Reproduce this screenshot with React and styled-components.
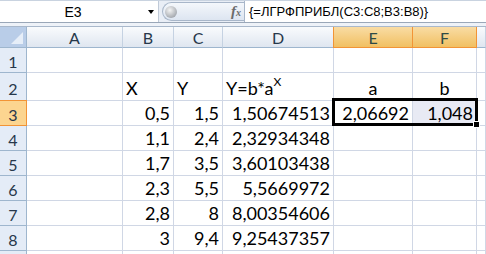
import React from "react";
import styled, { createGlobalStyle } from "styled-components";

const GlobalStyle = createGlobalStyle`
  html, body {
    margin: 0;
    padding: 0;
    background: #fff;
    overflow: hidden;
  }
  body {
    font-family: Lato, "Liberation Sans", sans-serif;
  }
`;

const columns = [
  { key: "A" },
  { key: "B" },
  { key: "C" },
  { key: "D" },
  { key: "E", selected: true },
  { key: "F", selected: true },
  { key: "" },
];

const rows = [
  { n: 1, height: 25, cells: ["", "", "", "", "", "", ""] },
  {
    n: 2,
    height: 28,
    cells: [
      "",
      { text: "X", align: "left" },
      { text: "Y", align: "left" },
      { text: "Y=b*a", sup: "X", align: "left" },
      { text: "a", align: "center" },
      { text: "b", align: "center" },
      "",
    ],
  },
  {
    n: 3,
    height: 25,
    selected: true,
    cells: ["", "0,5", "1,5", "1,50674513", "2,06692", { text: "1,048", tint: true }, ""],
  },
  { n: 4, height: 25, cells: ["", "1,1", "2,4", "2,32934348", "", "", ""] },
  { n: 5, height: 25, cells: ["", "1,7", "3,5", "3,60103438", "", "", ""] },
  { n: 6, height: 25, cells: ["", "2,3", "5,5", "5,5669972", "", "", ""] },
  { n: 7, height: 25, cells: ["", "2,8", "8", "8,00354606", "", "", ""] },
  { n: 8, height: 25, cells: ["", "3", "9,4", "9,25437357", "", "", ""] },
  // row 9 only peeks in at the bottom edge, its number is below the frame
  { n: 9, height: 25, hideLabel: true, cells: ["", "", "", "", "", "", ""] },
];

export default function App() {
  return (
    <>
      <GlobalStyle />
      <Window>
        <FormulaBar>
          <NameBox>
            <span>E3</span>
            <DropArrow />
          </NameBox>
          <FxButton>
            <Knob />
            <Fx>
              f<small>x</small>
            </Fx>
          </FxButton>
          <FormulaInput>{"{=ЛГРФПРИБЛ(C3:C8;B3:B8)}"}</FormulaInput>
        </FormulaBar>
        <Divider />
        <Sheet>
          <Grid $rows={rows.map((r) => `${r.height}px`).join(" ")}>
            <Corner>
              <svg width="14" height="14" viewBox="0 0 14 14">
                <path d="M13 1 L13 13 L1 13 Z" fill="#e6eef8" />
              </svg>
            </Corner>
            {columns.map((col, i) => (
              <ColumnHeader key={i} $selected={col.selected}>
                {col.key}
              </ColumnHeader>
            ))}
            {rows.map((row) => (
              <React.Fragment key={row.n}>
                <RowHeader $selected={row.selected}>
                  {row.hideLabel ? "" : row.n}
                </RowHeader>
                {row.cells.map((cell, i) => {
                  const data = typeof cell === "string" ? { text: cell } : cell;
                  return (
                    <Cell key={i} $align={data.align} $tint={data.tint}>
                      <span>
                        {data.text}
                        {data.sup && <Sup>{data.sup}</Sup>}
                      </span>
                    </Cell>
                  );
                })}
              </React.Fragment>
            ))}
          </Grid>
          <Selection>
            <FillHandle />
          </Selection>
        </Sheet>
      </Window>
    </>
  );
}

const Window = styled.div`
  width: 486px;
  height: 254px;
  overflow: hidden;
  display: flex;
  flex-direction: column;
  background: #fff;
`;

const FormulaBar = styled.div`
  height: 22px;
  display: flex;
  align-items: stretch;
  background: #e9eef6;
  border-top: 1px solid #c9d3e0;
  box-sizing: border-box;
  font-family: "Liberation Sans", Arial, sans-serif;
  font-size: 14px;
  color: #000;
`;

const NameBox = styled.div`
  width: 158px;
  display: flex;
  align-items: center;
  justify-content: center;
  position: relative;
  background: #fff;
  border-right: 1px solid #c0cad8;

  span {
    margin-left: -12px;
  }
`;

const DropArrow = styled.i`
  position: absolute;
  right: 4px;
  top: 9px;
  width: 0;
  height: 0;
  border-left: 3.5px solid transparent;
  border-right: 3.5px solid transparent;
  border-top: 4px solid #000;
`;

const FxButton = styled.div`
  margin: 1px 0 1px 3px;
  width: 82px;
  display: flex;
  align-items: center;
  justify-content: space-between;
  box-sizing: border-box;
  padding: 0 3px 0 2px;
  border: 1px solid #a8b6c9;
  border-right: none;
  border-radius: 10px 0 0 10px;
  background: linear-gradient(#f4f7fb, #dde5f1);
`;

const Knob = styled.span`
  width: 12px;
  height: 12px;
  border-radius: 50%;
  background: radial-gradient(circle at 40% 35%, #f4f4f4, #a9adb3 70%, #8e939a);
`;

const Fx = styled.span`
  font-family: "Liberation Serif", serif;
  font-style: italic;
  font-weight: bold;
  font-size: 15px;
  color: #6b6b6b;

  small {
    font-size: 10px;
  }
`;

const FormulaInput = styled.div`
  flex: 1;
  display: flex;
  align-items: center;
  padding-left: 4px;
  background: #fff;
  border-left: 1px solid #a8b6c9;
  white-space: nowrap;
  font-size: 13px;
`;

const Divider = styled.div`
  height: 5px;
  background: #eef2f8;
  border-top: 1px solid #9aa7b8;
  border-bottom: 1px solid #a9b8cb;
  box-sizing: border-box;
`;

const Sheet = styled.div`
  position: relative;
  flex: 1;
  overflow: hidden;
`;

const Grid = styled.div`
  display: grid;
  grid-template-columns: 27px 96px 51px 49px 111px 79px 64px 1fr;
  grid-template-rows: 21px ${({ $rows }) => $rows};
`;

const Corner = styled.div`
  box-sizing: border-box;
  background: #b9cde8;
  border-right: 1px solid #9eb6ce;
  border-bottom: 1px solid #9eb6ce;
  display: flex;
  align-items: flex-end;
  justify-content: flex-end;
  padding: 0 2px 2px 0;
`;

const ColumnHeader = styled.div`
  box-sizing: border-box;
  display: flex;
  align-items: center;
  justify-content: center;
  font-size: 16px;
  color: ${({ $selected }) => ($selected ? "#2f4a45" : "#27384b")};
  background: ${({ $selected }) =>
    $selected
      ? "linear-gradient(#f9dca4, #f1c062)"
      : "linear-gradient(#f9fbfd, #dfe6f0)"};
  border-right: 1px solid ${({ $selected }) => ($selected ? "#f29436" : "#c5d2e2")};
  border-bottom: 1px solid ${({ $selected }) => ($selected ? "#f29436" : "#9eb6ce")};
  box-shadow: ${({ $selected }) => ($selected ? "-1px 0 0 #f29436" : "none")};
`;

const RowHeader = styled.div`
  box-sizing: border-box;
  display: flex;
  align-items: center;
  justify-content: center;
  padding-top: 3px;
  font-size: 16px;
  color: #27384b;
  background: ${({ $selected }) => ($selected ? "#fcd590" : "#e4ecf7")};
  border-right: 1px solid ${({ $selected }) => ($selected ? "#f29436" : "#9eb6ce")};
  border-bottom: 1px solid ${({ $selected }) => ($selected ? "#f29436" : "#9eb6ce")};
  box-shadow: ${({ $selected }) => ($selected ? "0 -1px 0 #f29436" : "none")};
`;

const Cell = styled.div`
  box-sizing: border-box;
  display: flex;
  align-items: flex-end;
  justify-content: ${({ $align }) =>
    $align === "left" ? "flex-start" : $align === "center" ? "center" : "flex-end"};
  padding: 0 3px 1px;
  font-size: 18px;
  line-height: 22px;
  color: #000;
  white-space: nowrap;
  background: ${({ $tint }) => ($tint ? "#e8eaf4" : "#fff")};
  border-right: 1px solid #d0d7e5;
  border-bottom: 1px solid #d0d7e5;
`;

const Sup = styled.sup`
  font-size: 12px;
  line-height: 0;
  position: relative;
  top: -2px;
`;

const Selection = styled.div`
  position: absolute;
  left: 332px;
  top: 71px;
  width: 146px;
  height: 28px;
  box-sizing: border-box;
  border: 3px solid #000;
  pointer-events: none;
`;

const FillHandle = styled.span`
  position: absolute;
  right: -4px;
  bottom: -4px;
  width: 5px;
  height: 5px;
  background: #000;
  box-shadow: 0 0 0 1px #fff;
`;
